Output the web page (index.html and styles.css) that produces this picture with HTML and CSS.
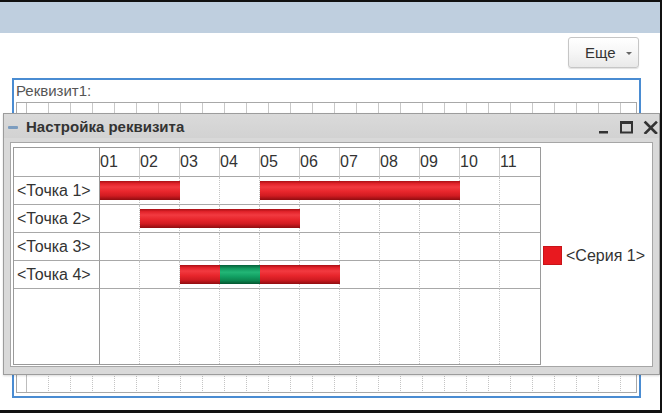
FILE: index.html
```html
<!DOCTYPE html>
<html lang="ru">
<head>
<meta charset="utf-8">
<title>Настройка реквизита</title>
<link rel="stylesheet" href="styles.css">
</head>
<body>
<div class="frame">
  <div class="header"></div>
  <div class="toolbar">
    <button class="more-btn"><span>Еще</span><span class="caret"></span></button>
  </div>
  <div class="field">
    <div class="field-label">Реквизит1:</div>
    <div class="mini">
      <div class="mini-label"></div>
      <div class="mini-plot">
        <div class="mini-head"></div>
        <div class="mini-body"></div>
      </div>
    </div>
  </div>

  <div class="window">
    <div class="title">
      <span class="collapse"></span>
      <span class="title-text">Настройка реквизита</span>
      <svg class="controls" width="59" height="14" viewBox="0 0 59 14">
        <rect x="0" y="11" width="9" height="2.5" fill="#333"/>
        <rect x="22" y="2" width="11" height="10.5" fill="none" stroke="#333" stroke-width="2"/>
        <rect x="21" y="1" width="13" height="3" fill="#333"/>
        <path d="M46.5 2.5 L57 13 M57 2.5 L46.5 13" stroke="#333" stroke-width="2.6" stroke-linecap="square"/>
      </svg>
    </div>
    <div class="body">
      <div class="panel">
        <div class="gantt">
          <div class="hrow">
            <div class="cell lbl"></div>
            <div class="cell hd">01</div>
            <div class="cell hd">02</div>
            <div class="cell hd">03</div>
            <div class="cell hd">04</div>
            <div class="cell hd">05</div>
            <div class="cell hd">06</div>
            <div class="cell hd">07</div>
            <div class="cell hd">08</div>
            <div class="cell hd">09</div>
            <div class="cell hd">10</div>
            <div class="cell hd last">11</div>
          </div>

          <div class="row">
            <div class="cells">
              <div class="cell lbl">&lt;Точка 1&gt;</div>
              <div class="cell"></div><div class="cell"></div><div class="cell"></div><div class="cell"></div><div class="cell"></div><div class="cell"></div><div class="cell"></div><div class="cell"></div><div class="cell"></div><div class="cell"></div><div class="cell last"></div>
            </div>
            <div class="bars">
              <div class="bar red c2-4"></div>
              <div class="bar red c6-11"></div>
            </div>
          </div>

          <div class="row">
            <div class="cells">
              <div class="cell lbl">&lt;Точка 2&gt;</div>
              <div class="cell"></div><div class="cell"></div><div class="cell"></div><div class="cell"></div><div class="cell"></div><div class="cell"></div><div class="cell"></div><div class="cell"></div><div class="cell"></div><div class="cell"></div><div class="cell last"></div>
            </div>
            <div class="bars">
              <div class="bar red c3-7"></div>
            </div>
          </div>

          <div class="row">
            <div class="cells">
              <div class="cell lbl">&lt;Точка 3&gt;</div>
              <div class="cell"></div><div class="cell"></div><div class="cell"></div><div class="cell"></div><div class="cell"></div><div class="cell"></div><div class="cell"></div><div class="cell"></div><div class="cell"></div><div class="cell"></div><div class="cell last"></div>
            </div>
            <div class="bars"></div>
          </div>

          <div class="row">
            <div class="cells">
              <div class="cell lbl">&lt;Точка 4&gt;</div>
              <div class="cell"></div><div class="cell"></div><div class="cell"></div><div class="cell"></div><div class="cell"></div><div class="cell"></div><div class="cell"></div><div class="cell"></div><div class="cell"></div><div class="cell"></div><div class="cell last"></div>
            </div>
            <div class="bars">
              <div class="bar red c4-5"></div>
              <div class="bar green c5-6"></div>
              <div class="bar red c6-8"></div>
            </div>
          </div>

          <div class="frow">
            <div class="cell lbl"></div>
            <div class="cell"></div><div class="cell"></div><div class="cell"></div><div class="cell"></div><div class="cell"></div><div class="cell"></div><div class="cell"></div><div class="cell"></div><div class="cell"></div><div class="cell"></div><div class="cell last"></div>
          </div>
        </div>
        <div class="legend">
          <span class="swatch"></span>
          <span class="legend-text">&lt;Серия 1&gt;</span>
        </div>
      </div>
    </div>
  </div>
</div>
</body>
</html>
```

FILE: styles.css
```css
* { box-sizing: border-box; }

html, body {
  margin: 0;
  padding: 0;
  background: #fff;
}

body {
  width: 666px;
  height: 414px;
  overflow: hidden;
  font-family: "Liberation Sans", Arial, sans-serif;
  color: #333;
}

.frame {
  position: relative;
  width: 662px;
  height: 413px;
  border-top: 2px solid #111;
  border-right: 2px solid #111;
  border-bottom: 3px solid #111;
  background: #fff;
}

.header {
  height: 31px;
  background: #bfcfdf;
}

.toolbar {
  display: flex;
  justify-content: flex-end;
  padding: 4px 21px 0 0;
  height: 35px;
}

.more-btn {
  display: flex;
  align-items: center;
  height: 31px;
  width: 71px;
  padding: 0 0 0 16px;
  margin: 0;
  border: 1px solid #c6c6c6;
  border-radius: 3px;
  background: linear-gradient(to bottom, #ffffff 0%, #f6f6f6 50%, #e9e9e9 100%);
  box-shadow: 0 1px 1px rgba(0, 0, 0, 0.12);
  font-family: "Liberation Sans", Arial, sans-serif;
  font-size: 15px;
  color: #333;
}

.caret {
  width: 0;
  height: 0;
  margin-left: 10px;
  margin-top: 1px;
  border-left: 3px solid transparent;
  border-right: 3px solid transparent;
  border-top: 3px solid #666;
}

.field {
  margin: 10px 0 0 12px;
  width: 629px;
  height: 320px;
  border: 2px solid #4a8cd2;
  padding: 0 2px 3px 2px;
}

.field-label {
  height: 22px;
  line-height: 21px;
  font-size: 15px;
  color: #555;
}

.mini {
  display: flex;
  height: 291px;
  border: 1px solid #a8a8a8;
}

.mini-label {
  width: 10px;
  border-right: 1px solid #bdbdbd;
}

.mini-plot {
  flex: 1;
  display: flex;
  flex-direction: column;
}

.mini-head {
  height: 11px;
  background-image: repeating-linear-gradient(90deg, transparent 0 21px, #c8c8c8 21px 22px);
}

.mini-body {
  flex: 1;
  background-image:
    repeating-linear-gradient(0deg, #fff 0 1px, transparent 1px 2px),
    repeating-linear-gradient(90deg, transparent 0 21px, #c4c4c4 21px 22px);
}

/* floating window */
.window {
  position: absolute;
  left: 3px;
  top: 111px;
  width: 657px;
  height: 262px;
  border: 1px solid #9c9c9c;
  background: #d9d9d9;
  box-shadow: 0 1px 2px rgba(0, 0, 0, 0.15);
}

.title {
  display: flex;
  align-items: center;
  height: 24px;
  padding-left: 4px;
  background: linear-gradient(to bottom, #dadada, #d2d2d2);
}

.collapse {
  width: 10px;
  height: 3px;
  margin-right: 8px;
  margin-top: 2px;
  border-radius: 1px;
  background: #7b9cbf;
}

.title-text {
  font-weight: bold;
  font-size: 15px;
  color: #333;
}

.controls {
  margin-left: auto;
  margin-right: 1px;
  margin-top: 2px;
}

.body {
  padding: 4px 6px 8px 6px;
}

.panel {
  display: flex;
  height: 225px;
  border: 1px solid #a6a6a6;
  background: #fff;
  padding: 4px 1px 1px 2px;
}

.gantt {
  display: flex;
  flex-direction: column;
  width: 528px;
  border: 1px solid #9a9a9a;
  font-size: 16px;
  color: #333;
}

.hrow,
.cells,
.frow {
  display: flex;
}

.hrow { height: 29px; }

.row {
  display: grid;
  height: 28px;
}

.cells,
.bars {
  grid-area: 1 / 1;
}

.bars {
  display: grid;
  grid-template-columns: 86px repeat(11, 40px);
  align-items: center;
  padding-bottom: 1px;
}

.frow {
  flex: 1;
}

.cell {
  width: 40px;
  flex: none;
  border-right: 1px dotted #c4c4c4;
  border-bottom: 1px solid #a8a8a8;
}

.frow .cell {
  border-bottom: none;
}

.cell.hd {
  border-right: 1px solid #cfcfcf;
  display: flex;
  align-items: center;
}

.cell.last {
  border-right: none;
}

.cell.lbl {
  width: 86px;
  border-right: 1px solid #9a9a9a;
  display: flex;
  align-items: center;
  padding-left: 3px;
  white-space: nowrap;
}

.bar {
  grid-row: 1;
  height: 19px;
}

.red {
  background: linear-gradient(to bottom, #a80f15 0%, #e2232a 14%, #f23a40 32%, #e8262c 55%, #d01b21 78%, #8f0c10 100%);
}

.green {
  background: linear-gradient(to bottom, #06603a 0%, #12985e 18%, #22b676 38%, #12a063 60%, #0b854f 82%, #05552f 100%);
}

.c2-4 { grid-column: 2 / 4; }
.c6-11 { grid-column: 6 / 11; }
.c3-7 { grid-column: 3 / 7; }
.c4-5 { grid-column: 4 / 5; }
.c5-6 { grid-column: 5 / 6; }
.c6-8 { grid-column: 6 / 8; }

.legend {
  flex: 1;
  display: flex;
  align-items: center;
  padding-left: 2px;
  padding-bottom: 1px;
}

.swatch {
  width: 19px;
  height: 19px;
  background: #e8191f;
  border: 1px solid #c81419;
}

.legend-text {
  margin-left: 4px;
  font-size: 16px;
  color: #333;
  white-space: nowrap;
}
```
